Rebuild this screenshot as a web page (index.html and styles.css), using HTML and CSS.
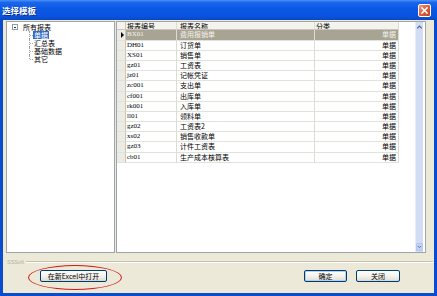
FILE: index.html
```html
<!DOCTYPE html>
<html lang="zh">
<head>
<meta charset="utf-8">
<title>选择模板</title>
<link rel="stylesheet" href="styles.css">
</head>
<body>
<div class="window">
  <div class="titlebar">
    <span class="title">选择模板</span>
    <span class="close-x">
      <svg width="11" height="11" viewBox="0 0 11 11"><path d="M3 3 L8 8 M8 3 L3 8" stroke="#fff" stroke-width="1.6" stroke-linecap="square"/></svg>
    </span>
  </div>
  <div class="client">
    <div class="panes">
      <div class="tree">
        <div class="root"><span class="expander"></span><span class="label">所有报表</span></div>
        <ul class="children">
          <li><span class="label sel">单据</span></li>
          <li><span class="label">汇总表</span></li>
          <li><span class="label">基础数据</span></li>
          <li><span class="label">其它</span></li>
        </ul>
      </div>
      <div class="gridpane">
        <div class="grid">
          <div class="row head"><div class="rh"></div><div class="c1">报表编号</div><div class="c2">报表名称</div><div class="c3">分类</div></div>
          <div class="row selected"><div class="rh"><span class="tri"></span></div><div class="c1 code">BX01</div><div class="c2">费用报销单</div><div class="c3">单据</div></div>
          <div class="row"><div class="rh"></div><div class="c1 code">DH01</div><div class="c2">订货单</div><div class="c3">单据</div></div>
          <div class="row"><div class="rh"></div><div class="c1 code">XS01</div><div class="c2">销售单</div><div class="c3">单据</div></div>
          <div class="row"><div class="rh"></div><div class="c1 code">gz01</div><div class="c2">工资表</div><div class="c3">单据</div></div>
          <div class="row"><div class="rh"></div><div class="c1 code">jz01</div><div class="c2">记帐凭证</div><div class="c3">单据</div></div>
          <div class="row"><div class="rh"></div><div class="c1 code">zc001</div><div class="c2">支出单</div><div class="c3">单据</div></div>
          <div class="row"><div class="rh"></div><div class="c1 code">cf001</div><div class="c2">出库单</div><div class="c3">单据</div></div>
          <div class="row"><div class="rh"></div><div class="c1 code">rk001</div><div class="c2">入库单</div><div class="c3">单据</div></div>
          <div class="row"><div class="rh"></div><div class="c1 code">ll01</div><div class="c2">领料单</div><div class="c3">单据</div></div>
          <div class="row"><div class="rh"></div><div class="c1 code">gz02</div><div class="c2">工资表2</div><div class="c3">单据</div></div>
          <div class="row"><div class="rh"></div><div class="c1 code">xs02</div><div class="c2">销售收款单</div><div class="c3">单据</div></div>
          <div class="row"><div class="rh"></div><div class="c1 code">gz03</div><div class="c2">计件工资表</div><div class="c3">单据</div></div>
          <div class="row"><div class="rh"></div><div class="c1 code">cb01</div><div class="c2">生产成本核算表</div><div class="c3">单据</div></div>
        </div>
        <div class="vscroll">
          <div class="sbtn up"><svg width="8" height="6" viewBox="0 0 8 6"><path d="M1.5 4.5 L4 2 L6.5 4.5" fill="none" stroke="#4d6185" stroke-width="1.3"/></svg></div>
          <div class="track"></div>
          <div class="sbtn down"><svg width="8" height="6" viewBox="0 0 8 6"><path d="M1.5 1.5 L4 4 L6.5 1.5" fill="none" stroke="#4d6185" stroke-width="1.3"/></svg></div>
        </div>
      </div>
    </div>
    <div class="footer">
      <div class="sep"><span class="brand">SSSoft</span><span class="line"></span></div>
      <div class="buttons">
        <span class="circled"><button class="btn excel">在新Excel中打开</button></span>
        <button class="btn ok">确定</button>
        <button class="btn cancel">关闭</button>
      </div>
    </div>
  </div>
</div>
</body>
</html>
```

FILE: styles.css
```css
* { box-sizing: border-box; margin: 0; padding: 0; }
html, body { width: 437px; height: 296px; overflow: hidden; }
body {
  font-family: "Noto Sans CJK SC", sans-serif;
  font-size: 7px;
  color: #000;
}
.window {
  height: 296px;
  display: flex;
  flex-direction: column;
  background: #0A4CD0;
}
.titlebar {
  height: 20px;
  flex: none;
  display: flex;
  align-items: center;
  justify-content: space-between;
  padding: 0 6px 0 2px;
  background: linear-gradient(#4A93F8 0%, #1C66EC 12%, #0A58E4 45%, #0A54DE 80%, #0947C4 100%);
}
.title {
  color: #fff;
  font-weight: bold;
  font-size: 8.5px;
  line-height: 10px;
  text-shadow: 1px 1px 0 #0A2E8A;
}
.close-x {
  width: 13px;
  height: 13px;
  border: 1px solid #fff;
  border-radius: 2px;
  background: linear-gradient(135deg, #F09A7E 0%, #E0603E 45%, #C9401E 100%);
  display: flex;
  align-items: center;
  justify-content: center;
}
.client {
  flex: 1;
  margin: 0 3px 3px;
  background: #ECE9D8;
  display: flex;
  flex-direction: column;
}
.panes {
  display: flex;
  gap: 1px;
  padding: 1px 8px 0 3px;
  height: 233px;
  flex: none;
}
.tree {
  width: 109px;
  background: #fff;
  border: 1px solid #9DA5AE;
  padding: 1px 0 0 5px;
  line-height: 8px;
}
.root { display: flex; align-items: center; height: 8px; }
.expander {
  width: 6px;
  height: 6px;
  border: 1px solid #8C9BAE;
  background: #fff;
  position: relative;
  margin-right: 4px;
}
.expander::after {
  content: "";
  position: absolute;
  left: 1px; top: 1.5px;
  width: 2px; height: 1px;
  background: #333;
}
.label { padding: 0 1px; }
.children {
  list-style: none;
  margin-left: 17px;
}
.children li {
  position: relative;
  height: 8px;
  padding-left: 4px;
  display: flex;
  align-items: center;
}
.children li::before {
  content: "";
  position: absolute;
  left: 0; top: 0;
  height: 8px;
  border-left: 1px dotted #A0A0A0;
}
.children li:last-child::before { height: 4px; }
.children li::after {
  content: "";
  position: absolute;
  left: 1px; top: 4px;
  width: 3px;
  border-top: 1px dotted #A0A0A0;
}
.label.sel { background: #316AC5; color: #fff; }

.gridpane {
  flex: 1;
  display: flex;
  background: #fff;
  border: 1px solid #9DA5AE;
}
.grid { flex: 1; }
.row {
  display: flex;
  height: 10.2px;
  line-height: 9px;
}
.row > div {
  border-right: 1px solid #DCDCD4;
  border-bottom: 1px solid #E2E2DC;
  white-space: nowrap;
  overflow: hidden;
}
.rh {
  width: 9px;
  background: #ECEBE4;
  border-right: 1px solid #C8C6BC !important;
  display: flex;
  align-items: center;
  justify-content: flex-end;
  padding-right: 1px;
}
.c1 { width: 51px; padding-left: 1px; }
.c2 { width: 138px; padding-left: 3px; }
.c3 { width: 84px; text-align: right; padding-right: 2px; }
.code { font-family: "Liberation Serif", serif; font-size: 7px; }
.row.head { height: 8.4px; line-height: 8px; }
.row.head > div { background: #F4F3EE; border-bottom: 1px solid #C9C6B8; }
.row.head .c3 { text-align: left; padding-left: 1px; }
.row.selected .c1, .row.selected .c2, .row.selected .c3 {
  background: #A8A493;
  color: #F4F2EA;
}
.tri {
  width: 0; height: 0;
  border-top: 3px solid transparent;
  border-bottom: 3px solid transparent;
  border-left: 3px solid #000;
}
.vscroll {
  width: 8px;
  margin-right: 2px;
  display: flex;
  flex-direction: column;
  background: #D3DCF5;
  border-left: 1px solid #E6ECFB;
}
.sbtn {
  height: 8px;
  display: flex;
  align-items: center;
  justify-content: center;
}
.sbtn.up { margin-top: 1px; }
.sbtn.down {
  background: #C2D1F5;
  border: 1px solid #B4C6EE;
  border-radius: 1px;
  margin-bottom: 1px;
}
.track { flex: 1; }

.footer {
  flex: 1;
  display: flex;
  flex-direction: column;
}
.sep {
  display: flex;
  align-items: center;
  height: 10px;
  margin-top: 4px;
  padding-left: 4px;
  gap: 2px;
}
.brand { color: #B4B1A4; font-family: "Liberation Sans", sans-serif; font-size: 5.5px; }
.line {
  flex: 1;
  border-top: 1px solid #C5C2B2;
  border-bottom: 1px solid #fff;
  margin-right: 1px;
}
.buttons {
  display: flex;
  align-items: center;
  margin-top: 3px;
  padding: 0 34px 0 37px;
}
.btn {
  font-family: "Noto Sans CJK SC", sans-serif;
  font-size: 7px;
  line-height: 10px;
  height: 12px;
  border: 1px solid #003C74;
  border-radius: 2px;
  background: linear-gradient(#FFFFFF 0%, #F4F3EE 50%, #E4E1D6 90%, #D6D0C5 100%);
  color: #000;
  padding: 0;
}
.excel { width: 67px; }
.ok { width: 43px; margin-left: auto; box-shadow: inset 0 0 0 1px #B9CDF1; }
.cancel { width: 44px; margin-left: 9px; }
.circled { position: relative; display: flex; }
.circled::after {
  content: "";
  position: absolute;
  left: -12px; top: -5px;
  width: 92px; height: 23px;
  border: 1.5px solid #D41818;
  border-radius: 50%;
}
```
